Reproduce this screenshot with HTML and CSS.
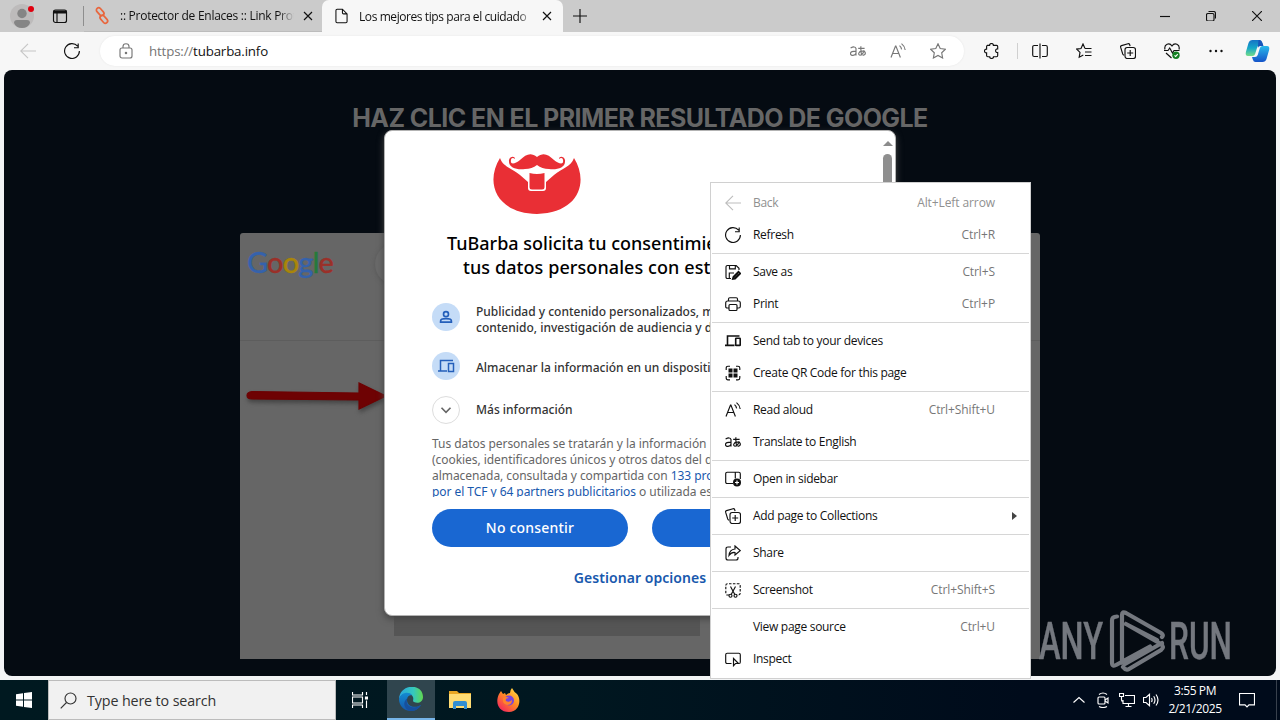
FILE: index.html
```html
<!DOCTYPE html>
<html lang="es">
<head>
    <meta charset="UTF-8">
    <title>Los mejores tips para el cuidado</title>
    <link rel="stylesheet" href="styles.css">
</head>
<body>
<svg class="defs" aria-hidden="true">
    <symbol id="back" viewBox="0 0 16 16"><path d="M16 8H.7M8 .8.7 8 8 15.2"/></symbol>
    <symbol id="refresh" viewBox="0 0 16 16"><path d="M15.4 8A7.4 7.4 0 1 1 13.6 3.2M14.2.5v4.2H10"/></symbol>
    <symbol id="collections" viewBox="0 0 16 16"><path d="M3.8 12.3 2.7 11 .6 4.2Q.3 3 1.5 2.6L8 .7q1.2-.3 1.6.8l.5 1.7"/><rect x="5" y="4.5" width="10.5" height="11" rx="2.2"/><path d="M10.2 7v6M7.2 10h6"/></symbol>
    <symbol id="aloud" viewBox="0 0 16 16"><path d="M1 14.5 5.5 3h.4l4.5 11.5M2.6 10.5h6.2M9.5 2.6q1.8 1.4 2.1 3.8M11.5.6Q14.7 3 15.2 7"/></symbol>
    <symbol id="translate" viewBox="0 0 16 16"><path d="M.6 5.1q4.3-2.5 5.4.4v7M6 8.1c-3.3 0-5.5.5-5.5 2.4 0 2.7 4.8 2.5 5.500-.3M8.2 5.400h6.400M10.900 3.300q-.4 5 .9 9.100M14.100 7.100c-.7 2.700-2 4.800-3.900 5-2.600.1-1.800-4 2-4 4 0 4.200 3.700.5 4.300"/></symbol>
    <symbol id="devices" viewBox="0 0 16 16"><path d="M14.5 3H2.5v9M0 12.4h9.5"/><rect x="10.7" y="5.2" width="4.5" height="7.2" rx=".5"/></symbol>
</svg>

<header class="tabs">
    <svg class="avatar" viewBox="0 0 24 26"><circle cx="12" cy="14" r="12" fill="#bdbbbb"/><circle cx="12" cy="11.500" r="4.700" fill="#858585"/><path d="M4 21q0-3 3-3h10q3 0 3 3-2 5-8 5t-8-5" fill="#858585"/><circle cx="21" cy="7" r="3" fill="#e0000f"/></svg>
    <svg class="workspaces" viewBox="0 0 16 16"><rect x="1.500" y="2" width="13" height="12.500" rx="2"/><path d="M1.500 4h13" stroke-width="3"/><path d="M5 4v10"/></svg>
    <span class="tab-line"></span>
    <div class="tab">
        <svg class="chain" viewBox="0 0 14 14"><rect x="3" y="-1.600" width="4.600" height="9" rx="2.300" transform="rotate(-42 5 3)"/><rect x="6.400" y="5.600" width="4.600" height="9" rx="2.300" transform="rotate(-42 9 10)"/></svg>
        <span class="tab-title first">:: Protector de Enlaces :: Link Protector</span>
        <svg class="x" viewBox="0 0 10 10"><path d="m1 1 8 8m0-8L1 9"/></svg>
    </div>
    <div class="tab active">
        <svg class="doc" viewBox="0 0 14 16"><path d="M1 2Q1 .7 2.300.7H8l5 5V14q0 1.300-1.300 1.300H2.300Q1 15.300 1 14zM8 .7V4.500q0 1.200 1.200 1.200H13"/></svg>
        <span class="tab-title second">Los mejores tips para el cuidado</span>
        <svg class="x" viewBox="0 0 10 10"><path d="m1 1 8 8m0-8L1 9"/></svg>
    </div>
    <svg class="plus" viewBox="0 0 14 14"><path d="M7 0v14M0 7h14"/></svg>
    <div class="window-buttons">
        <svg viewBox="0 0 10 10"><path d="M0 5.500h10"/></svg>
        <svg viewBox="0 0 10 10"><rect x=".5" y="2.500" width="7.500" height="7.500" rx="1.500"/><path d="M2.500.500h5q2 0 2 2v5"/></svg>
        <svg viewBox="0 0 10 10"><path d="m0 0 10 10M10 0 0 10"/></svg>
    </div>
</header>

<nav class="toolbar">
    <svg class="nav-back"><use href="#back"/></svg>
    <svg class="nav-refresh"><use href="#refresh"/></svg>
    <div class="address">
        <svg class="lock" viewBox="0 0 14 16"><rect x="1" y="5" width="12" height="10" rx="2"/><path d="M4 5V3.500q0-2.800 3-2.800t3 2.800V5"/><circle cx="7" cy="10" r=".7"/></svg>
        <span class="url"><span class="scheme">https://</span>tubarba.info</span>
        <svg class="a-icon"><use href="#translate"/></svg>
        <svg class="a-icon"><use href="#aloud"/></svg>
        <svg class="a-icon" viewBox="0 0 16 16"><path d="m8 .8 2.200 4.700 5.200.7-3.700 3.600.9 5.200L8 12.500 3.400 15l.9-5.200L.6 6.200l5.200-.7z"/></svg>
    </div>
    <div class="tools">
        <svg viewBox="0 0 16 16"><path d="M3 2.300h2.600c-.2-2.400 4-2.400 3.800 0h3.200q1.100 0 1.100 1.100v2.500c-2.800-.5-2.800 4 0 3.600v3q0 1.200-1.200 1.200H9.500c.2 2.400-4 2.400-3.800 0H3.800q-1.200 0-1.200-1.200V9.800c-2.800.4-2.800-4 0-3.700V3.500q0-1.200 1-1.200"/></svg>
        <span class="tool-line"></span>
        <svg viewBox="0 0 16 16"><path d="M6 2.500H2.200Q.7 2.500.7 4v8q0 1.500 1.500 1.500H6M10 2.500h3.800q1.500 0 1.500 1.500v8q0 1.500-1.500 1.500H10M8 .5v15"/></svg>
        <svg viewBox="0 0 16 16"><path d="M9 5.500 7 1 5 5.500l-4.300.6L4 9.400l-.8 4.800L7.300 12M9 5.500h6.500M9 9h6.500M9 12.500h6.500"/></svg>
        <svg><use href="#collections"/></svg>
        <svg viewBox="0 0 16 16"><path d="M1 6.500C-.3 1 5.500-.8 8 3c2.500-3.800 8.300-2 7 3.500M0 7.500h4L5.700 5l2.800 5L10 7.500h5.500M2 10l5.500 5"/><circle class="ok" cx="12" cy="12.300" r="3.700"/><path class="tick" d="m10.500 12.300 1.200 1.200 2-2.400"/></svg>
        <svg class="dots" viewBox="0 0 16 16"><circle cx="2.500" cy="8" r="1.200"/><circle cx="8" cy="8" r="1.200"/><circle cx="13.500" cy="8" r="1.200"/></svg>
    </div>
    <svg class="copilot" viewBox="0 0 24 24">
        <defs>
            <linearGradient id="cpA" x2="0" y2="1"><stop stop-color="#1673c6"/><stop offset=".5" stop-color="#15a6c8"/><stop offset="1" stop-color="#75dd88"/></linearGradient>
            <linearGradient id="cpB" x2="0" y2="1"><stop stop-color="#28b9eb"/><stop offset="1" stop-color="#1554c9"/></linearGradient>
        </defs>
        <path d="M7 1h7q2 0 2.700 2.500L17.500 6h-3q-2 0-2.700 2l-2.200 7q-.6 2-2.600 2H2.500Q-.5 17 .4 13L3 4q1-3 4-3" fill="url(#cpA)"/>
        <path d="M17 23h-7q-2 0-2.700-2.500L6.500 18h3q2 0 2.700-2l2.200-7q.6-2 2.600-2h4.500q3 0 2.100 4L21 20q-1 3-4 3" fill="url(#cpB)"/>
        <path d="M13 1h1q2 0 2.700 2.500L18 7h-3q-2 0-2.700 2z" fill="#1755ba"/>
    </svg>
</nav>

<main class="page">
    <h1 class="headline">HAZ CLIC EN EL PRIMER RESULTADO DE GOOGLE</h1>
    <section class="result">
        <div class="google-bar">
            <div class="google"><span class="blue">G</span><span class="red">o</span><span class="yellow">o</span><span class="blue">g</span><span class="green">l</span><span class="red">e</span></div>
            <div class="google-input"></div>
        </div>
        <svg class="arrow" viewBox="0 0 144 34"><path d="m8 12.500 107 1.500V4l27 13-27 13V21L8 20Q3 20 3 16.500T8 12.500" /></svg>
        <div class="strip"></div>
    </section>
</main>

<section class="consent">
    <div class="consent-body">
        <svg class="beard" viewBox="0 0 88 60">
            <path d="M7 4C-8 28 2 59 44 60 86 59 96 28 81 4 78 13 69 14 61 21L53 28V34q0 3-3 3H38q-3 0-3-3V28L27 21C19 14 10 13 7 4"/>
            <path d="M44 3C38-2 33 0 27 6c-5 4-10 5-9 0 0-2 2-3 4-1 0-3-5-3-6 1-1 8 8 10 16 9q7 0 12-4 5 4 12 4c8 1 17-1 16-9-1-4-6-4-6-1 2-2 4-1 4 1 1 5-4 4-9 0-6-6-11-8-17-3"/>
            <path d="M36.500 19q7.500 2 15 0v14q0 2.500-2.500 2.500H39q-2.500 0-2.500-2.500z"/>
        </svg>
        <h2 class="consent-title"><span>TuBarba solicita tu consentimiento</span><span class="line-two">tus datos personales con estos</span></h2>
        <div class="purpose">
            <span class="round"><svg viewBox="0 0 16 16"><circle cx="8" cy="5.500" r="2.200"/><path d="M3.200 12.500v-1q0-2 4.800-2t4.800 2v1z"/></svg></span>
            <p><span>Publicidad y contenido personalizados, medición</span><span>contenido, investigación de audiencia y desarrollo</span></p>
        </div>
        <div class="purpose storage">
            <span class="round"><svg viewBox="0 0 18 18"><path d="M16 3.500H3.500v10M1 14h9"/><rect x="11.500" y="6.500" width="5" height="8"/></svg></span>
            <p>Almacenar la información en un dispositivo</p>
        </div>
        <div class="purpose more">
            <span class="round outline"><svg viewBox="0 0 16 16"><path d="m4 6 4 4 4-4"/></svg></span>
            <p>Más información</p>
        </div>
        <p class="legal"><span>Tus datos personales se tratarán y la información</span><span>(cookies, identificadores únicos y otros datos del dispositivo)</span><span>almacenada, consultada y compartida con <a>133 proveedores</a></span><span><a>por el TCF y 64 partners publicitarios</a> o utilizada específicamente</span></p>
    </div>
    <div class="consent-buttons">
        <button>No consentir</button>
        <button aria-label="Consentir"></button>
    </div>
    <a class="options">Gestionar opciones</a>
    <div class="scroll"><span class="scroll-up"></span><span class="scroll-thumb"></span></div>
</section>

<svg class="watermark" viewBox="0 0 200 64">
    <text x="1" y="49.500" textLength="64" lengthAdjust="spacingAndGlyphs">ANY</text>
    <path d="M79 7.500q-5 0-5 4v42q0 5 5 2l33-18M84 54V6q0-4 4-2l35 20q3 2 1 4M88 15l31 16M124 34 87 55M85 58q3 4 6 2l32-19q4-3 0-6L88 15"/>
    <text x="131" y="49.500" textLength="63" lengthAdjust="spacingAndGlyphs">RUN</text>
</svg>

<div class="menu">
    <div class="item disabled"><svg><use href="#back"/></svg>Back<kbd>Alt+Left arrow</kbd></div>
    <div class="item"><svg><use href="#refresh"/></svg>Refresh<kbd>Ctrl+R</kbd></div>
    <hr>
    <div class="item"><svg viewBox="0 0 16 16"><path d="M6 14.500H2.500q-1.500 0-1.500-1.500V3q0-1.500 1.500-1.500h8.700L14 4.300V6M4.500 1.500v3.300h5.800V1.500M4.300 14V9H9"/><path d="m8.500 13 5-5 1.500 1.500-5 5-2 .3z" stroke-width="2"/></svg>Save as<kbd>Ctrl+S</kbd></div>
    <div class="item"><svg viewBox="0 0 16 16"><path d="M4 12H2.200Q.7 12 .7 10.500V7q0-2 2-2h10.600q2 0 2 2v3.500q0 1.500-1.500 1.500H12M3.500 5V3q0-1.300 1.300-1.300h6.400q1.300 0 1.300 1.300v2"/><rect x="4" y="8.500" width="8" height="6" rx="1"/></svg>Print<kbd>Ctrl+P</kbd></div>
    <hr>
    <div class="item"><svg class="heavy"><use href="#devices"/></svg>Send tab to your devices</div>
    <div class="item"><svg viewBox="0 0 16 16"><path d="M5 1.200H3Q1.200 1.200 1.200 3v2M11 1.200h2q1.800 0 1.800 1.800v2M5 14.800H3q-1.800 0-1.800-1.800v-2M11 14.800h2q1.800 0 1.800-1.800v-2"/><path class="solid" d="M3.500 3.500h4v4h-4zM8.500 3.500h4v4h-4zM3.500 8.500h4v4h-4zM8.500 8.500h4v4h-4z"/></svg>Create QR Code for this page</div>
    <hr>
    <div class="item"><svg><use href="#aloud"/></svg>Read aloud<kbd>Ctrl+Shift+U</kbd></div>
    <div class="item"><svg><use href="#translate"/></svg>Translate to English</div>
    <hr>
    <div class="item"><svg viewBox="0 0 16 16"><path d="M8 12.500H2.200q-1.500 0-1.500-1.500V2.700q0-1.500 1.500-1.500h11.600q1.500 0 1.500 1.500V8M10.300 1.500v6"/><circle class="solid" cx="12" cy="11.500" r="4"/><path class="cut" d="M12 9.500v4m-2-2h4"/></svg>Open in sidebar</div>
    <hr>
    <div class="item"><svg><use href="#collections"/></svg>Add page to Collections<span class="submenu"></span></div>
    <hr>
    <div class="item"><svg viewBox="0 0 16 16"><path d="M6 2H3q-2 0-2 2v9q0 2 2 2h8q2 0 2-2v-1M10 1l5.200 4.600L10 10V7.500Q6.500 7 4 10.500 4.500 4.500 10 4z"/></svg>Share</div>
    <hr>
    <div class="item"><svg viewBox="0 0 16 16"><path stroke-dasharray="2.500 1.400" d="M4 13H2.500Q.8 13 .8 11V3.500Q.8 1.700 2.500 1.700h11q1.700 0 1.700 1.800V11q0 2-1.700 2H12"/><path d="m5.500 4.500 4.300 8M10.500 4.500l-4.300 8"/><circle cx="5.500" cy="13.700" r="1.500"/><circle cx="10.500" cy="13.700" r="1.500"/></svg>Screenshot<kbd>Ctrl+Shift+S</kbd></div>
    <hr>
    <div class="item"><svg></svg>View page source<kbd>Ctrl+U</kbd></div>
    <div class="item"><svg viewBox="0 0 16 16"><path d="M6.500 12.500H2.200q-1.500 0-1.500-1.500V3.700q0-1.500 1.500-1.500h11.600q1.500 0 1.500 1.500V11q0 1.500-1 1.500M8.500 7.500v7.200l2-2.200h3z"/></svg>Inspect</div>
</div>

<footer class="taskbar">
    <div class="start"><svg viewBox="0 0 16 16"><path d="M0 2.200 7 1.200V7.500H0zM8 1.100 16 0v7.500H8zM0 8.500h7v6.300l-7-1zM8 8.500h8V16l-8-1.100z"/></svg></div>
    <div class="search"><svg viewBox="0 0 17 17"><circle cx="10.500" cy="6.500" r="5.500"/><path d="M6.500 10.500.7 16.300"/></svg>Type here to search</div>
    <div class="task"><svg class="taskview" viewBox="0 0 16 16"><path d="M.5 0v3h10V0M.5 16v-3h10v3M.5 5h10v6H.5zM14.500 0v3M14.500 8.500V16"/><path d="M13.500 5h2v2h-2z" fill="#fff"/></svg></div>
    <div class="task current">
        <svg class="app" viewBox="0 0 24 24">
            <defs>
                <linearGradient id="edA"><stop stop-color="#2aa6df"/><stop offset=".6" stop-color="#35c8be"/><stop offset="1" stop-color="#61d84f"/></linearGradient>
                <linearGradient id="edB" x2="0" y2="1"><stop stop-color="#138bd2"/><stop offset="1" stop-color="#1556ab"/></linearGradient>
            </defs>
            <path d="M0 12C1-4 24-4 24 10c0 5-5 7-9 5-2-1 0-2-1-5C12 5 3 5 0 12" fill="url(#edA)"/>
            <path d="M0 12c2-7 10-8 13-4-4 0-5 3-5 5 0 6 7 9 14 5-3 5-7 6-11 6C4 23.500 0 18 0 12" fill="url(#edB)"/>
            <path d="M8.500 11C5 20 15 23 22 18c-3 5-7 6-11 6-6-2-8-9-2.500-13" fill="#174f9d"/>
        </svg>
    </div>
    <div class="task">
        <svg class="app" viewBox="0 0 24 24"><path d="M1 3h8l2 2h12v15H1z" fill="#e9a723"/><path d="M1 6h22v14H1z" fill="#ffdc73"/><path d="M5 21v-6q0-2 2-2h10q2 0 2 2v6h-3v-3H8v3z" fill="#338fd2"/></svg>
    </div>
    <div class="task">
        <svg class="app" viewBox="0 0 24 24">
            <defs><linearGradient id="ff" x1="1" x2=".2" y2="1"><stop stop-color="#ffe84a"/><stop offset=".5" stop-color="#ff8b23"/><stop offset="1" stop-color="#f4235f"/></linearGradient></defs>
            <path d="M2 6 4 3l2 3 2-1 1 2q2-2 4-2 0-3 2-5 2 4 5 6c5 6 2 18-8 18C1 24-2 14 2 6" fill="url(#ff)"/><circle cx="12" cy="12.500" r="5" fill="#7744dd"/><path d="M6 10q3-2 6 0-4 0-3 3 3 2 6-1 0 5-5 5-5-1-4-7" fill="#ff832c"/>
        </svg>
    </div>
    <div class="tray">
        <svg viewBox="0 0 16 16"><path d="m2.500 10.500 5.500-5 5.500 5"/></svg>
        <svg viewBox="0 0 16 16"><rect x="3" y="5" width="7" height="7" rx="1"/><path d="m10 8 3-2v5l-3-2M4 2.500Q8-.5 12 2.500M4 14.500q4 2 8 0"/></svg>
        <svg viewBox="0 0 16 16"><path d="M6 3.500h9.500v8H4V8M9.500 12v3M6.500 14.500h6M.5 1.500h4v3h-4zM2.500 4.500V8q0 1.500 1.500 1.500"/></svg>
        <svg viewBox="0 0 16 16"><path d="M.5 5.500H3L6.500 2.300v11.400L3 10.500H.5zM8.500 6q1.200 2 0 4M10.700 4.200q2.600 3.800 0 7.600M13 2.500q4 5.500 0 11"/></svg>
    </div>
    <div class="clock"><span>3:55 PM</span><span>2/21/2025</span></div>
    <svg class="notice" viewBox="0 0 16 16"><path d="M.5 1.500h15v11.300H10L8 15l-2-2.200H.5z"/></svg>
    <span class="desktop-edge"></span>
</footer>
</body>
</html>
```

FILE: styles.css
```css
* {
    box-sizing: border-box;
}

body {
    margin: 0;
    width: 1280px;
    height: 720px;
    overflow: hidden;
    position: relative;
    display: flex;
    flex-direction: column;
    background: #f3f4f5;
    font-family: "Open Sans", "Noto Sans", sans-serif;
    font-size: 12px;
    color: #111;
}

h1, h2, p {
    margin: 0;
}

svg {
    flex: none;
    fill: none;
    stroke: currentColor;
    stroke-width: 1.15;
}

.defs {
    position: absolute;
    width: 0;
    height: 0;
}

/* tab strip */
.tabs {
    height: 32px;
    display: flex;
    align-items: center;
    background: #cbcbcb;
    flex: none;
}

.avatar {
    width: 24px;
    height: 26px;
    margin: 0 0 2px 10px;
    stroke: none;
}

.workspaces {
    width: 16px;
    height: 16px;
    margin-left: 18px;
}

.tab-line {
    width: 1px;
    height: 20px;
    margin-left: 15px;
    background: #8e8e8e;
}

.tab {
    display: flex;
    align-items: center;
    width: 238px;
    height: 32px;
    padding-left: 11px;
    border-bottom: 1px solid #bcbcbc;
}

.tab.active {
    width: 241px;
    background: #f7f7f7;
    border: 0;
    border-radius: 7px 7px 0 0;
    padding-left: 13px;
}

.chain {
    width: 14px;
    height: 14px;
    color: #e8663d;
    stroke-width: 1.7;
    overflow: visible;
}

.doc {
    width: 13px;
    height: 16px;
}

.tab-title {
    width: 176px;
    margin: 0 7px 0 11px;
    overflow: hidden;
    white-space: nowrap;
    font-size: 12px;
    letter-spacing: -0.27px;
    -webkit-mask-image: linear-gradient(to right, #000 90%, transparent 99%);
    mask-image: linear-gradient(to right, #000 90%, transparent 99%);
}

.second {
    letter-spacing: -0.42px;
}

.x {
    width: 10px;
    height: 10px;
}

.plus {
    width: 14px;
    height: 14px;
    margin-left: 10px;
}

.window-buttons {
    display: flex;
    gap: 36px;
    margin: 0 18px 0 auto;
}

.window-buttons svg {
    width: 10px;
    height: 10px;
}

/* toolbar */
.toolbar {
    height: 38px;
    flex: none;
    display: flex;
    align-items: center;
    background: #f7f7f7;
    padding-left: 20px;
}

.toolbar > svg {
    width: 16px;
    height: 16px;
}

.toolbar .nav-back {
    color: #c6c6c6;
}

.toolbar .nav-refresh {
    margin-left: 28px;
}

.address {
    display: flex;
    align-items: center;
    width: 864px;
    height: 30px;
    margin-left: 20px;
    padding: 0 18px 0 19px;
    border-radius: 15px;
    background: #fff;
    box-shadow: 0 0 2px #e4e4e4;
    color: #777;
}

.lock {
    width: 14px;
    height: 16px;
}

.url {
    margin: 0 auto 0 16px;
    font-size: 13.3px;
    letter-spacing: -0.16px;
    color: #111;
}

.scheme {
    color: #757575;
}

.a-icon {
    width: 16px;
    height: 16px;
    margin-left: 24px;
}

.tools {
    display: flex;
    align-items: center;
    gap: 28px;
    margin-left: 20px;
}

.tools svg {
    width: 16px;
    height: 16px;
}

.tool-line {
    width: 1px;
    height: 16px;
    margin: 0 -14px 0 -11px;
    background: #d0d0d0;
}

.ok {
    fill: #138022;
    stroke: none;
}

.tick {
    stroke: #fff;
}

.dots {
    fill: #111;
    stroke: none;
}

.toolbar > .copilot {
    width: 25px;
    height: 24px;
    margin-left: 21px;
    stroke: none;
}

/* dimmed page */
.page {
    height: 606px;
    margin: 0 4px 4px;
    flex: none;
    overflow: hidden;
    border-radius: 8px;
    background: #050b12;
    display: flex;
    flex-direction: column;
    align-items: center;
}

.headline {
    height: 36px;
    margin-top: 30px;
    font: 700 25px/37px Inter, sans-serif;
    letter-spacing: -0.57px;
    white-space: nowrap;
    color: #666;
}

.result {
    width: 800px;
    height: 426px;
    margin-top: 97px;
    background: #666;
    border-radius: 3px 3px 0 0;
    display: flex;
    flex-direction: column;
}

.google-bar {
    display: flex;
    height: 108px;
    padding: 9px 8px 0 7px;
    border-bottom: 1px solid #5d5d5d;
}

.google {
    width: 87px;
    font: 500 29px/40px Lato, sans-serif;
    letter-spacing: -0.9px;
    -webkit-text-stroke: 0.3px;
}

.google-input {
    width: 600px;
    height: 42px;
    margin: 1px 0 0 41px;
    border-radius: 21px;
    background: #696969;
    box-shadow: 0 1px 4px #595959;
}

.blue {
    color: #3562ac;
}

.red {
    color: #9b3029;
}

.yellow {
    color: #a98509;
}

.green {
    color: #267a3c;
}

.arrow {
    width: 144px;
    height: 34px;
    margin: 38px 0 0 4px;
    fill: #6e0203;
    stroke: #6e0203;
    filter: drop-shadow(1px 3px 2px #444);
}

.strip {
    width: 306px;
    height: 30px;
    margin: auto 0 23px 154px;
    background: #555;
}

/* consent window */
.consent {
    position: absolute;
    left: 384px;
    top: 130px;
    width: 512px;
    height: 486px;
    border-radius: 8px;
    background: #fff;
    border: 1px solid #b3b3b3;
    box-shadow: 0 3px 7px #444;
    overflow: hidden;
    font-family: "Noto Sans", "Open Sans", sans-serif;
}

.consent-body {
    height: 366px;
    padding: 23px 0 0 47px;
    overflow: hidden;
    white-space: nowrap;
}

.beard {
    display: block;
    width: 88px;
    height: 60px;
    margin-left: 61px;
    fill: #e92f35;
    stroke: none;
}

.consent-title {
    margin: 17px 0 22px 15px;
    font-size: 18px;
    line-height: 24px;
    font-weight: 550;
    color: #000;
}

.consent-title span,
.purpose p span,
.legal > span {
    display: block;
}

.consent-title .line-two {
    margin-left: 16px;
    letter-spacing: 0.08px;
}

.purpose {
    display: flex;
    align-items: center;
    height: 32px;
    line-height: 16px;
    font-weight: 500;
    color: #333;
}

.purpose p {
    margin: 5px 0 0 16px;
}

.storage {
    margin-top: 17px;
}

.storage p {
    margin-top: 3px;
}

.more {
    margin-top: 12px;
}

.more p {
    margin-top: 0;
}

.round {
    display: flex;
    align-items: center;
    justify-content: center;
    width: 28px;
    height: 28px;
    border-radius: 50%;
    background: #c5dcf7;
    color: #245fba;
}

.round svg {
    width: 18px;
    height: 18px;
    stroke-width: 1.5;
}

.outline {
    background: #fff;
    border: 1px solid #ddd;
    color: #666;
}

.legal {
    margin-top: 10px;
    line-height: 16px;
    letter-spacing: -0.05px;
    color: #666;
}

.legal a,
.options {
    color: #1858ad;
}

.consent-buttons {
    display: flex;
    gap: 24px;
    padding: 12px 47px 0;
}

.consent-buttons button {
    width: 196px;
    height: 38px;
    padding: 0 0 2px;
    border: 0;
    border-radius: 19px;
    background: #1967d2;
    color: #fff;
    font: 500 14px "Noto Sans", sans-serif;
    letter-spacing: 0.2px;
}

.options {
    display: block;
    margin-top: 21px;
    text-align: center;
    font-size: 14px;
    line-height: 20px;
    font-weight: 600;
    letter-spacing: 0.05px;
}

.scroll {
    position: absolute;
    right: 0;
    top: 0;
    width: 15px;
    display: flex;
    flex-direction: column;
    align-items: center;
    padding-top: 10px;
}

.scroll-up {
    border: 5px solid transparent;
    border-top: 0;
    border-bottom: 5px solid #8b8b8b;
}

.scroll-thumb {
    width: 9px;
    height: 190px;
    margin-top: 8px;
    border-radius: 5px;
    background: #8f8f8f;
}

.watermark {
    position: absolute;
    left: 1038px;
    top: 609px;
    width: 200px;
    height: 64px;
    opacity: .85;
    stroke: #888b92;
    stroke-width: 4.2;
    stroke-linecap: round;
}

.watermark text {
    fill: #888b92;
    stroke-width: 0.4;
    font: 500 52px Roboto, sans-serif;
}

/* context menu */
.menu {
    position: absolute;
    left: 710px;
    top: 182px;
    width: 321px;
    height: 497px;
    padding: 4px 0;
    background: #fff;
    border: 1px solid #d0d0d0;
}

.item {
    display: flex;
    align-items: center;
    height: 32px;
    padding: 0 35px 0 14px;
    white-space: nowrap;
    font-size: 12px;
    line-height: 16px;
    letter-spacing: -0.3px;
    color: #111;
}

.item svg {
    width: 16px;
    height: 16px;
    margin-right: 12px;
}

.item .heavy {
    stroke-width: 1.6;
}

.item kbd {
    margin-left: auto;
    font-family: inherit;
    font-size: inherit;
    letter-spacing: -0.1px;
    color: #777;
}

.disabled,
.disabled kbd {
    color: #909090;
}

.disabled svg {
    color: #bdbdbd;
}

.menu hr {
    height: 1px;
    margin: 2px 1px;
    border: 0;
    background: #d6d6d6;
}

.solid {
    fill: #111;
    stroke: none;
}

.cut {
    stroke: #fff;
}

.submenu {
    margin: 0 -22px 0 auto;
    border: 4px solid transparent;
    border-left: 5px solid #444;
    border-right: 0;
}

/* taskbar */
.taskbar {
    height: 40px;
    flex: none;
    display: flex;
    align-items: center;
    background: linear-gradient(to right, #001920, #001720 45%, #000b1b 80%);
    color: #fff;
}

.start,
.task {
    width: 48px;
    height: 40px;
    display: flex;
    align-items: center;
    justify-content: center;
}

.start svg {
    width: 16px;
    height: 16px;
    fill: #fff;
    stroke: none;
}

.search {
    width: 288px;
    height: 40px;
    display: flex;
    align-items: center;
    gap: 10px;
    padding-left: 11px;
    border: 1px solid #bcbcbc;
    background: #f1f1f1;
    color: #333;
    font-size: 14.3px;
    letter-spacing: -0.13px;
}

.search svg {
    width: 17px;
    height: 17px;
}

.taskview {
    width: 16px;
    height: 16px;
}

.task.current {
    margin-left: 3px;
    background: #30454e;
    border-bottom: 2px solid #77b5e9;
}

.task + .task:not(.current) {
    margin-left: 1px;
}

.app {
    width: 24px;
    height: 24px;
    stroke: none;
}

.tray {
    display: flex;
    gap: 8px;
    margin-left: auto;
}

.tray svg {
    width: 16px;
    height: 16px;
}

.clock {
    width: 72px;
    display: flex;
    flex-direction: column;
    align-items: center;
    line-height: 18px;
    font-size: 12px;
    letter-spacing: -0.4px;
}

.notice {
    width: 16px;
    height: 16px;
    margin: 0 21px 0 8px;
}

.desktop-edge {
    width: 4px;
    height: 40px;
    border-left: 1px solid #38414d;
}
```
